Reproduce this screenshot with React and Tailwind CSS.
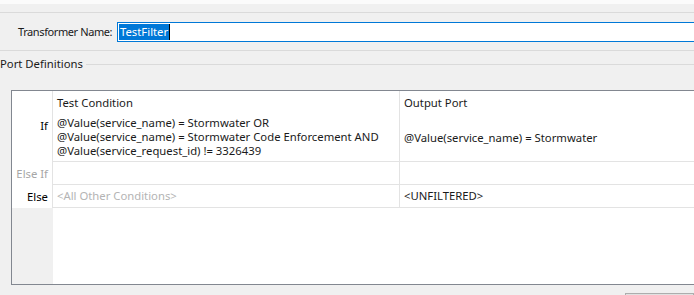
const font = { fontFamily: "'Noto Sans', 'Open Sans', sans-serif" };

const rows = [
  {
    label: "If",
    muted: false,
    condition: [
      "@Value(service_name) = Stormwater OR",
      "@Value(service_name) = Stormwater Code Enforcement AND",
      "@Value(service_request_id) != 3326439",
    ],
    output: "@Value(service_name) = Stormwater",
  },
  { label: "Else If", muted: true, condition: [], output: "" },
  { label: "Else", muted: false, condition: ["<All Other Conditions>"], placeholder: true, output: "<UNFILTERED>" },
];

const RowLabel = ({ row }) => (
  <div
    className={
      "w-[41px] shrink-0 bg-white pr-[4px] text-right border-r border-[#e3e3e3] " +
      (row.muted ? "text-[#a6a6a6]" : "text-black") +
      (row.label === "If" ? " pt-[5px]" : " flex items-center justify-end")
    }
  >
    {row.label}
  </div>
);

export default function App() {
  return (
    <div className="h-[295px] w-[694px] overflow-hidden whitespace-nowrap bg-[#f0f0f0] text-[11.3px] leading-[14px] text-[#1a1a1a]" style={font}>
      <div className="h-[4px] bg-[#fbfbfb]" />
      <div className="h-[8px]" />
      <div className="border-t border-[#dadada]" />
      <div className="h-[9px]" />

      <div className="flex h-[20px] items-center">
        <div className="w-[117px] shrink-0 pl-[18px] text-[11px] tracking-[-0.4px]">Transformer Name:</div>
        <div className="flex h-[20px] w-[640px] shrink-0 items-center border border-[#0078d7] bg-white pl-[1px]">
          <span className="bg-[#0078d7] px-[1px] leading-[16px] text-white">TestFilter</span>
          <span className="h-[16px] w-[1px] bg-black" />
        </div>
      </div>

      <div className="h-[8px]" />
      <div className="border-t border-[#dadada]" />

      <div className="mt-[6px] flex h-[14px] items-center">
        <span className="shrink-0">Port Definitions</span>
        <div className="ml-[3px] flex-1 border-t border-[#dadada]" />
      </div>

      <div className="h-[19px]" />

      <div className="ml-[11px] flex h-[195px] w-[720px] flex-col border border-[#828790] bg-white">
        <div className="flex h-[23px] shrink-0">
          <div className="w-[41px] shrink-0 border-r border-[#e3e3e3]" />
          <div className="flex w-[347px] shrink-0 items-center border-r border-[#e3e3e3] pl-[4px]">Test Condition</div>
          <div className="flex flex-1 items-center pl-[4px]">Output Port</div>
        </div>

        {rows.map((row) => (
          <div
            key={row.label}
            className={"flex shrink-0 " + (row.label === "If" ? "h-[48px]" : "h-[23px]")}
          >
            <RowLabel row={row} />
            <div
              className={
                "w-[347px] shrink-0 border-b border-r border-[#e3e3e3] pl-[4px] " +
                (row.label === "If" ? "pt-[2px]" : "flex items-center") +
                (row.placeholder ? " text-[#b4b4b4]" : "")
              }
            >
              <div>
                {row.condition.map((line) => (
                  <div key={line}>{line}</div>
                ))}
              </div>
            </div>
            <div className="flex flex-1 items-center border-b border-[#e3e3e3] pl-[4px]">{row.output}</div>
          </div>
        ))}

        <div className="flex flex-1">
          <div className="w-[41px] shrink-0 bg-[#f0f0f0]" />
          <div className="flex-1" />
        </div>
      </div>

      <div className="mt-[8px] flex justify-end">
        <div className="h-[20px] w-[69px] border border-[#adadad] bg-[#e1e1e1]" />
      </div>
    </div>
  );
}
